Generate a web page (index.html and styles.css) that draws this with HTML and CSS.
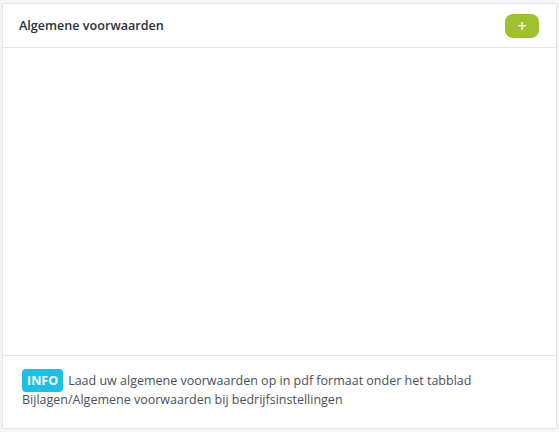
FILE: index.html
```html
<!DOCTYPE html>
<html lang="nl">
<head>
    <meta charset="UTF-8">
    <title>Algemene voorwaarden</title>
    <link rel="stylesheet" href="styles.css">
</head>
<body>
    <div class="card">
        <div class="card-header">
            <h3 class="card-title">Algemene voorwaarden</h3>
            <button class="btn-add">+</button>
        </div>
        <div class="card-body"></div>
        <div class="card-footer">
            <p class="info-line"><span class="badge-info">INFO</span> Laad uw algemene voorwaarden op in pdf formaat onder het tabblad</p>
            <p class="info-line">Bijlagen/Algemene voorwaarden bij bedrijfsinstellingen</p>
        </div>
    </div>
</body>
</html>
```

FILE: styles.css
```css
body {
    margin: 0;
    padding: 3px 2px 3px 2px;
    background: #f3f5f8;
    font-family: "Open Sans", "Liberation Sans", sans-serif;
    box-sizing: border-box;
    height: 432px;
}

.card {
    height: 100%;
    box-sizing: border-box;
    background: #ffffff;
    border: 1px solid #e2e5ea;
    display: flex;
    flex-direction: column;
}

.card-header {
    display: flex;
    justify-content: space-between;
    align-items: center;
    height: 43px;
    padding: 0 17px 0 16px;
    border-bottom: 1px solid #e2e5ea;
}

.card-title {
    margin: 0;
    font-size: 12.6px;
    font-weight: 600;
    color: #2b303b;
}

.btn-add {
    width: 34px;
    height: 24px;
    border: none;
    border-radius: 8px;
    background: #9dc12f;
    color: #ffffff;
    font-size: 16px;
    font-weight: 600;
    line-height: 24px;
    padding: 0;
    font-family: "Open Sans", sans-serif;
}

.card-body {
    flex: 1;
}

.card-footer {
    border-top: 1px solid #e2e5ea;
    padding: 12px 18px 19px 19px;
    font-size: 12.5px;
    color: #4a4f57;
}

.info-line {
    margin: 0;
    display: flex;
    align-items: center;
    gap: 5px;
    height: 20px;
}

.info-line:first-child {
    height: 24px;
    margin-bottom: -3px;
}

.badge-info {
    display: inline-block;
    background: #1cbfe6;
    color: #ffffff;
    font-weight: 700;
    font-size: 12.5px;
    line-height: 23px;
    padding: 0 5px;
    border-radius: 4px;
}
```
